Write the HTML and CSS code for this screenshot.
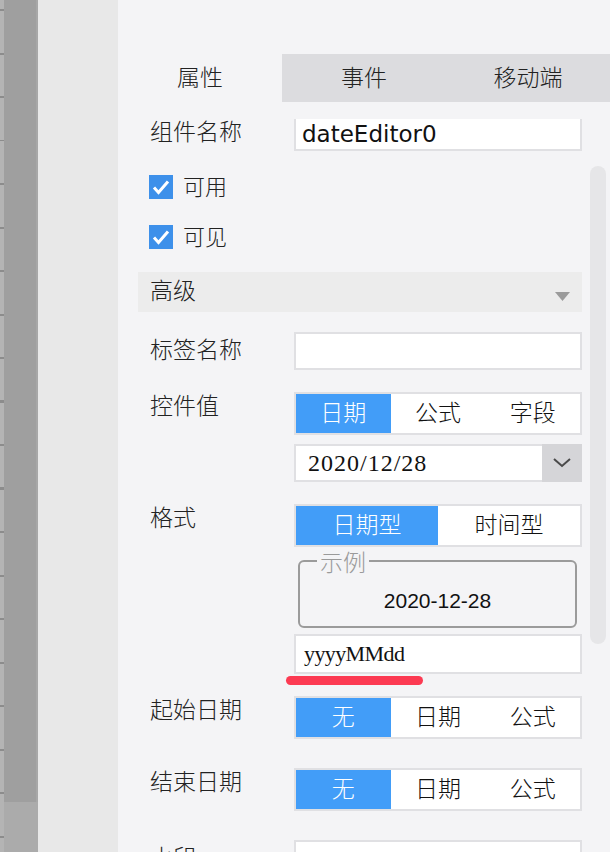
FILE: index.html
```html
<!DOCTYPE html>
<html>
<head>
    <meta charset="utf-8">
    <title>属性面板</title>
    <link rel="stylesheet" href="styles.css">
</head>
<body>
    <div class="ruler"></div>
    <div class="strip">
        <div class="strip-top"></div>
        <div class="strip-bottom"></div>
    </div>
    <div class="canvas"></div>

    <div class="panel">
        <div class="tabs">
            <div class="tab active">属性</div>
            <div class="tab">事件</div>
            <div class="tab">移动端</div>
        </div>

        <div class="props">
            <div class="scrollbar"></div>

            <!-- 组件名称 -->
            <div class="row row-name">
                <div class="label">组件名称</div>
                <div class="control">
                    <div class="input name-input">dateEditor0</div>
                </div>
            </div>

            <div class="check check-first">
                <svg class="cb" width="24" height="24" viewBox="0 0 24 24">
                    <rect width="24" height="24" fill="#3d90ea"/>
                    <path d="M5 12.5l4.5 5L19 6.5" fill="none" stroke="#fff" stroke-width="3"/>
                </svg>
                <span>可用</span>
            </div>
            <div class="check">
                <svg class="cb" width="24" height="24" viewBox="0 0 24 24">
                    <rect width="24" height="24" fill="#3d90ea"/>
                    <path d="M5 12.5l4.5 5L19 6.5" fill="none" stroke="#fff" stroke-width="3"/>
                </svg>
                <span>可见</span>
            </div>

            <!-- 高级 -->
            <div class="section">
                <span>高级</span>
                <svg class="section-arrow" width="15" height="9" viewBox="0 0 15 9">
                    <path d="M0 0h15L7.5 9z" fill="#9b9b9b"/>
                </svg>
            </div>

            <div class="row row-tag">
                <div class="label label-tall">标签名称</div>
                <div class="control">
                    <div class="input"></div>
                </div>
            </div>

            <div class="row row-value">
                <div class="label">控件值</div>
                <div class="control">
                    <div class="seg">
                        <div class="seg-item on">日期</div>
                        <div class="seg-item">公式</div>
                        <div class="seg-item">字段</div>
                    </div>
                    <div class="select">
                        <div class="select-text">2020/12/28</div>
                        <div class="select-btn">
                            <svg width="18" height="10" viewBox="0 0 18 10">
                                <path d="M1 1l8 7 8-7" fill="none" stroke="#4a4a4a" stroke-width="2"/>
                            </svg>
                        </div>
                    </div>
                </div>
            </div>

            <div class="row row-format">
                <div class="label">格式</div>
                <div class="control">
                    <div class="seg">
                        <div class="seg-item on">日期型</div>
                        <div class="seg-item">时间型</div>
                    </div>
                    <fieldset class="sample">
                        <legend>示例</legend>
                        <div class="sample-text">2020-12-28</div>
                    </fieldset>
                    <div class="input fmt-input">
                        yyyyMMdd
                        <div class="mark"></div>
                    </div>
                </div>
            </div>

            <div class="row row-start">
                <div class="label">起始日期</div>
                <div class="control">
                    <div class="seg">
                        <div class="seg-item on">无</div>
                        <div class="seg-item">日期</div>
                        <div class="seg-item">公式</div>
                    </div>
                </div>
            </div>

            <div class="row row-end">
                <div class="label">结束日期</div>
                <div class="control">
                    <div class="seg">
                        <div class="seg-item on">无</div>
                        <div class="seg-item">日期</div>
                        <div class="seg-item">公式</div>
                    </div>
                </div>
            </div>

            <div class="row row-mark">
                <div class="label label-tall">水印</div>
                <div class="control">
                    <div class="input"></div>
                </div>
            </div>
        </div>
    </div>
</body>
</html>
```

FILE: styles.css
```css
* {
    box-sizing: border-box;
}
html, body {
    margin: 0;
}
body {
    display: flex;
    width: 610px;
    height: 852px;
    overflow: hidden;
    font-family: "Noto Sans CJK SC", "Liberation Sans", sans-serif;
    font-weight: 300;
    color: #222;
}

/* 左侧标尺和画布 */
.ruler {
    width: 4px;
    flex: none;
    background: repeating-linear-gradient(to bottom, transparent 0 9px, #8c8c8c 9px 11px, transparent 11px 43.5px), #b4b4b4;
}
.strip {
    width: 34px;
    flex: none;
    display: flex;
    flex-direction: column;
}
.strip-top {
    height: 802px;
    background: #9f9f9f;
    border-right: 2px solid #a7a7a7;
}
.strip-bottom {
    flex: 1;
    background: #ababab;
}
.canvas {
    width: 80px;
    flex: none;
    background: #e8e8e8;
}

/* 右侧属性面板 */
.panel {
    flex: 1;
    min-width: 0;
    display: flex;
    flex-direction: column;
    padding-top: 54px;
    background: #f4f4f6;
}
.tabs {
    display: flex;
    height: 48px;
    flex: none;
}
.tab {
    flex: 1;
    display: flex;
    align-items: center;
    justify-content: center;
    padding-bottom: 5px;
    font-size: 23px;
    background: #dcdcdf;
    color: #222;
}
.tab.active {
    background: #f4f4f6;
}
.props {
    position: relative;
    flex: 1;
    padding: 0 28px 0 32px;
}
.scrollbar {
    position: absolute;
    right: 4px;
    top: 64px;
    width: 16px;
    height: 478px;
    border-radius: 8px;
    background: #e6e6e8;
}

.row {
    display: flex;
    align-items: flex-start;
}
.label {
    width: 144px;
    flex: none;
    margin-top: -3px;
    font-size: 23px;
    line-height: 30px;
    color: #222;
}
.label-tall {
    line-height: 38px;
}
.control {
    width: 288px;
    flex: none;
}

.input {
    height: 38px;
    background: #fff;
    border: 2px solid #e0e0e3;
}
.name-input {
    height: 32px;
    border-top: none;
    padding-left: 6px;
    font-family: "DejaVu Sans", sans-serif;
    font-weight: 400;
    font-size: 23px;
    line-height: 30px;
    color: #111;
}
.row-name {
    margin-top: 17px;
}
.row-name .label {
    margin-top: -4px;
}

.check {
    display: flex;
    align-items: center;
    gap: 10px;
    height: 26px;
    margin-top: 24px;
    margin-left: -1px;
    font-size: 22px;
    color: #222;
}
.check span {
    padding-bottom: 5px;
}
.check-first {
    margin-top: 23px;
}
.cb {
    display: block;
}

.section {
    display: flex;
    align-items: center;
    height: 40px;
    margin: 22px 0 0 -12px;
    padding: 0 12px 7px;
    background: #ececec;
    font-size: 23px;
    color: #222;
}
.section-arrow {
    margin-left: auto;
    align-self: flex-start;
    margin-top: 20px;
}

.row-tag {
    margin-top: 20px;
}
.row-value,
.row-format,
.row-start {
    margin-top: 22px;
}
.row-end,
.row-mark {
    margin-top: 29px;
}

/* 分段按钮 */
.seg {
    display: flex;
    height: 43px;
    border: 2px solid #e0e0e3;
    background: #fff;
}
.seg-item {
    flex: 1;
    display: flex;
    align-items: center;
    justify-content: center;
    padding-bottom: 5px;
    font-size: 23px;
    color: #111;
}
.seg-item.on {
    background: #429df8;
    color: #fff;
}

.select {
    display: flex;
    height: 38px;
    margin-top: 9px;
}
.select-text {
    flex: 1;
    background: #fff;
    border: 2px solid #e0e0e3;
    border-right: none;
    padding-left: 12px;
    font-family: "Liberation Serif", serif;
    font-weight: 400;
    font-size: 24px;
    letter-spacing: 1px;
    line-height: 34px;
    color: #111;
}
.select-btn {
    width: 40px;
    display: flex;
    align-items: center;
    justify-content: center;
    background: #d5d5d8;
}

.sample {
    margin: 2px 5px 0 4px;
    padding: 16px 10px 13px;
    border: 2px solid #9b9b9b;
    border-radius: 6px;
}
.sample legend {
    margin-left: 7px;
    padding: 0 3px;
    font-size: 23px;
    line-height: 24px;
    color: #9a9a9a;
}
.sample-text {
    text-align: center;
    font-family: "Liberation Sans", sans-serif;
    font-weight: 400;
    font-size: 21px;
    line-height: 24px;
    color: #111;
}

.fmt-input {
    position: relative;
    height: 40px;
    margin-top: 6px;
    padding-left: 8px;
    font-family: "Liberation Serif", serif;
    font-weight: 400;
    font-size: 22px;
    letter-spacing: -0.6px;
    line-height: 36px;
    color: #111;
}
.mark {
    position: absolute;
    left: -10px;
    top: calc(100% + 4px);
    width: 137px;
    height: 9px;
    border-radius: 5px;
    background: #fc3a52;
}
```
